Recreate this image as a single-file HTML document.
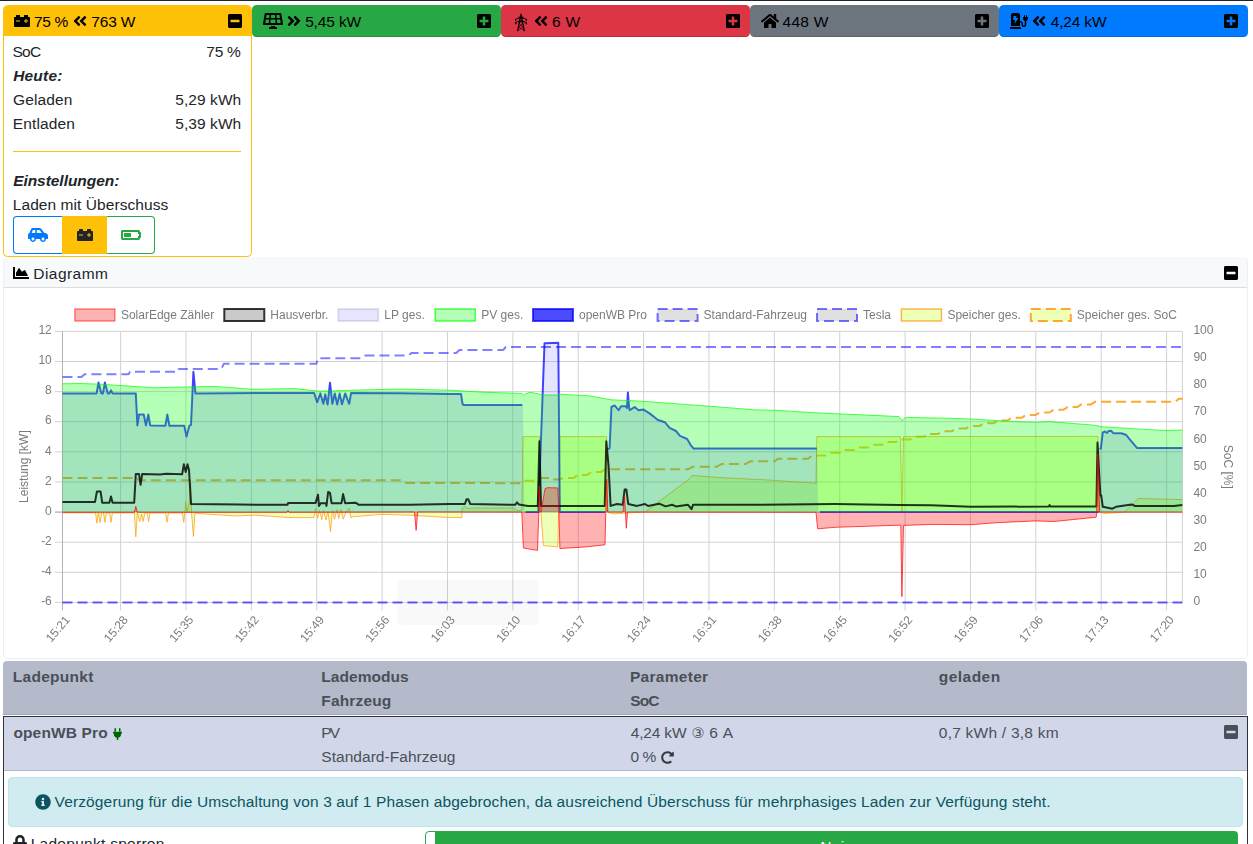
<!DOCTYPE html>
<html lang="de"><head><meta charset="utf-8"><title>openWB</title><style>
html,body{margin:0;padding:0}
body{width:1253px;height:844px;overflow:hidden;background:#fff;position:relative;font-family:"Liberation Sans",Arial,sans-serif;font-size:15.5px;line-height:24px;color:#212529}
#topline{position:absolute;left:0;top:0;width:1253px;height:1px;background:#21252b}
.card{position:absolute;box-sizing:border-box;border-radius:4.5px;overflow:hidden}
.ic{position:absolute;display:block;overflow:visible}
.btn{position:absolute;box-sizing:border-box}
.t{position:absolute;white-space:nowrap;line-height:24px;font-size:15.5px}
.hd{color:#000}
.bd{color:#212529}
.bi{font-weight:bold;font-style:italic}
.b{font-weight:bold}
.tb{color:#495057}
.al{color:#0c5460}
.wh{color:#fff}
</style></head><body>
<div id="topline"></div>
<div class="card c1" style="left:2.94px;top:4.9px;width:249.1px;height:252.2px;border:1px solid #ffc107;background:#fff"><div class="chd" style="background:#ffc107;height:30px"></div></div>
<div class="card" style="left:252.04px;top:4.9px;width:249.1px;height:32.3px;background:#28a745;border-bottom:1px solid rgba(0,0,0,.14)"></div>
<div class="card" style="left:501.14px;top:4.9px;width:249.1px;height:32.3px;background:#dc3545;border-bottom:1px solid rgba(0,0,0,.14)"></div>
<div class="card" style="left:750.24px;top:4.9px;width:249.1px;height:32.3px;background:#6c757d;border-bottom:1px solid rgba(0,0,0,.14)"></div>
<div class="card" style="left:999.34px;top:4.9px;width:249.1px;height:32.3px;background:#007bff;border-bottom:1px solid rgba(0,0,0,.14)"></div>
<svg class="ic" style="left:13.70px;top:13.00px" width="16.00" height="16" viewBox="0 0 512 512"><path fill="#000" d="M480 128h-32V80c0-8.840-7.160-16-16-16h-96c-8.840 0-16 7.160-16 16v48H192V80c0-8.840-7.160-16-16-16H80c-8.840 0-16 7.160-16 16v48H32c-17.670 0-32 14.330-32 32v256c0 17.670 14.330 32 32 32h448c17.670 0 32-14.330 32-32V160c0-17.670-14.330-32-32-32zM192 264c0 4.420-3.580 8-8 8H72c-4.420 0-8-3.580-8-8v-16c0-4.420 3.580-8 8-8h112c4.420 0 8 3.580 8 8v16zm256 0c0 4.420-3.580 8-8 8h-40v40c0 4.420-3.580 8-8 8h-16c-4.420 0-8-3.580-8-8v-40h-40c-4.420 0-8-3.580-8-8v-16c0-4.420 3.580-8 8-8h40v-40c0-4.420 3.580-8 8-8h16c4.420 0 8 3.580 8 8v40h40c4.420 0 8 3.580 8 8v16z"/></svg>
<svg class="ic" style="left:73.00px;top:12.50px" width="14.00" height="16" viewBox="0 0 448 512"><path fill="#000" d="M223.700 239l136-136c9.400-9.400 24.600-9.400 33.900 0l22.600 22.600c9.400 9.400 9.400 24.600 0 33.900L319.900 256l96.400 96.400c9.400 9.400 9.400 24.600 0 33.900L393.700 409c-9.400 9.400-24.600 9.400-33.900 0l-136-136c-9.500-9.400-9.500-24.600-.100-34zm-192 34l136 136c9.400 9.400 24.600 9.400 33.900 0l22.600-22.600c9.400-9.400 9.400-24.600 0-33.900L127.900 256l96.400-96.400c9.400-9.400 9.400-24.600 0-33.900L201.700 103c-9.400-9.400-24.600-9.400-33.900 0l-136 136c-9.500 9.400-9.500 24.600-.100 34z"/></svg>
<svg class="ic" style="left:227.60px;top:13.00px" width="14.00" height="16" viewBox="0 0 448 512"><path fill="#000" d="M400 32H48C21.500 32 0 53.500 0 80v352c0 26.500 21.500 48 48 48h352c26.500 0 48-21.500 48-48V80c0-26.500-21.500-48-48-48zM92 296c-6.600 0-12-5.400-12-12v-56c0-6.600 5.400-12 12-12h264c6.600 0 12 5.400 12 12v56c0 6.600-5.400 12-12 12H92z"/></svg>
<svg class="ic" style="left:262.60px;top:13.00px" width="20.00" height="16" viewBox="0 0 640 512"><path fill="#000" d="M431.980 448.010l-47.970.050V416h-128v32.210l-47.980.050c-8.820.010-15.970 7.160-15.980 15.990l-.050 31.730c-.010 8.850 7.170 16.030 16.020 16.020l223.960-.260c8.820-.010 15.970-7.160 15.980-15.980l.040-31.730c.010-8.850-7.170-16.030-16.020-16.020zM585.200 26.740C582.580 11.310 568.990 0 553.060 0H86.930C71 0 57.410 11.310 54.790 26.740-3.320 369.160.040 348.080.030 352c-.030 17.320 14.290 32 32.600 32h574.740c18.230 0 32.510-14.560 32.600-31.790.020-4.080 3.350 16.950-54.770-325.470zM259.830 64h120.330l9.770 96H250.060l9.770-96zm-75.170 256H71.090L90.100 208h105.930l-11.370 112zm16.290-160H98.240l16.290-96h96.190l-9.770 96zm32.820 160l11.400-112h149.650l11.400 112H233.770zm195.500-256h96.190l16.290 96H439.040l-9.770-96zm26.060 256l-11.400-112H549.900l19.010 112H455.330z"/></svg>
<svg class="ic" style="left:286.60px;top:12.50px" width="14.00" height="16" viewBox="0 0 448 512"><path fill="#000" d="M224.300 273l-136 136c-9.400 9.400-24.600 9.400-33.900 0l-22.600-22.600c-9.400-9.400-9.400-24.600 0-33.900l96.400-96.400-96.400-96.400c-9.400-9.400-9.400-24.600 0-33.900L54.300 103c9.400-9.400 24.600-9.400 33.900 0l136 136c9.500 9.400 9.500 24.600.100 34zm192-34l-136-136c-9.400-9.400-24.600-9.400-33.900 0l-22.600 22.600c-9.400 9.400-9.400 24.600 0 33.900l96.400 96.400-96.400 96.400c-9.400 9.400-9.400 24.600 0 33.900l22.600 22.600c9.400 9.400 24.600 9.400 33.900 0l136-136c9.400-9.200 9.400-24.400 0-33.800z"/></svg>
<svg class="ic" style="left:476.70px;top:13.00px" width="14.00" height="16" viewBox="0 0 448 512"><path fill="#000" d="M400 32H48C21.500 32 0 53.500 0 80v352c0 26.500 21.500 48 48 48h352c26.500 0 48-21.500 48-48V80c0-26.500-21.500-48-48-48zm-32 252c0 6.600-5.400 12-12 12h-92v92c0 6.600-5.400 12-12 12h-56c-6.600 0-12-5.400-12-12v-92H92c-6.600 0-12-5.400-12-12v-56c0-6.600 5.400-12 12-12h92v-92c0-6.600 5.400-12 12-12h56c6.600 0 12 5.400 12 12v92h92c6.600 0 12 5.400 12 12v56z"/></svg>
<svg class="ic" style="left:513.5px;top:13px" width="14" height="19" viewBox="0 0 14 19" fill="none" stroke="#000" stroke-linecap="round" stroke-linejoin="round"><path d="M7 1.2 L3.7 17.6 M7 1.2 L10.3 17.6" stroke-width="1.15"/><path d="M5.9 6.6 L8.8 10.8 L4.7 14 L10.3 17.6 M8.1 6.6 L5.2 10.8 L9.3 14 L3.7 17.6" stroke-width="0.65"/><path d="M1.7 6.5 C3.2 4.3 10.8 4.3 12.3 6.5 M5 4.2 L9 4.2" stroke-width="1"/><path d="M1.7 6.3 L1.7 7.2 M12.3 6.3 L12.3 7.2" stroke-width="1.3"/><path d="M1.8 9.8 C3.4 7.6 10.6 7.6 12.2 9.8" stroke-width="1"/><path d="M1.8 9.6 L1.8 10.8 M12.2 9.6 L12.2 10.8" stroke-width="1.3"/></svg>
<svg class="ic" style="left:533.70px;top:12.50px" width="14.00" height="16" viewBox="0 0 448 512"><path fill="#000" d="M223.700 239l136-136c9.400-9.400 24.600-9.400 33.900 0l22.600 22.600c9.400 9.400 9.400 24.600 0 33.900L319.900 256l96.400 96.400c9.400 9.400 9.400 24.600 0 33.900L393.700 409c-9.400 9.400-24.600 9.400-33.900 0l-136-136c-9.500-9.400-9.500-24.600-.100-34zm-192 34l136 136c9.400 9.400 24.600 9.400 33.900 0l22.600-22.600c9.400-9.400 9.400-24.600 0-33.900L127.900 256l96.400-96.400c9.400-9.400 9.400-24.600 0-33.900L201.700 103c-9.400-9.400-24.600-9.400-33.900 0l-136 136c-9.500 9.400-9.500 24.600-.100 34z"/></svg>
<svg class="ic" style="left:725.80px;top:13.00px" width="14.00" height="16" viewBox="0 0 448 512"><path fill="#000" d="M400 32H48C21.500 32 0 53.500 0 80v352c0 26.500 21.500 48 48 48h352c26.500 0 48-21.500 48-48V80c0-26.500-21.500-48-48-48zm-32 252c0 6.600-5.400 12-12 12h-92v92c0 6.600-5.400 12-12 12h-56c-6.600 0-12-5.400-12-12v-92H92c-6.600 0-12-5.400-12-12v-56c0-6.600 5.400-12 12-12h92v-92c0-6.600 5.400-12 12-12h56c6.600 0 12 5.400 12 12v92h92c6.600 0 12 5.400 12 12v56z"/></svg>
<svg class="ic" style="left:760.90px;top:13.00px" width="18.00" height="16" viewBox="0 0 576 512"><path fill="#000" d="M280.370 148.260L96 300.110V464a16 16 0 0 0 16 16l112.060-.290a16 16 0 0 0 15.920-16V368a16 16 0 0 1 16-16h64a16 16 0 0 1 16 16v95.640a16 16 0 0 0 16 16.050L464 480a16 16 0 0 0 16-16V300L295.670 148.260a12.190 12.190 0 0 0-15.300 0zM571.600 251.470L488 182.560V44.050a12 12 0 0 0-12-12h-56a12 12 0 0 0-12 12v72.610L318.470 43a48 48 0 0 0-61 0L4.340 251.470a12 12 0 0 0-1.600 16.900l25.500 31A12 12 0 0 0 45.150 301l235.220-193.740a12.190 12.190 0 0 1 15.300 0L530.900 301a12 12 0 0 0 16.900-1.600l25.500-31a12 12 0 0 0-1.700-16.930z"/></svg>
<svg class="ic" style="left:974.90px;top:13.00px" width="14.00" height="16" viewBox="0 0 448 512"><path fill="#000" d="M400 32H48C21.500 32 0 53.500 0 80v352c0 26.500 21.500 48 48 48h352c26.500 0 48-21.500 48-48V80c0-26.500-21.500-48-48-48zm-32 252c0 6.600-5.400 12-12 12h-92v92c0 6.600-5.400 12-12 12h-56c-6.600 0-12-5.400-12-12v-92H92c-6.600 0-12-5.400-12-12v-56c0-6.600 5.400-12 12-12h92v-92c0-6.600 5.400-12 12-12h56c6.600 0 12 5.400 12 12v92h92c6.600 0 12 5.400 12 12v56z"/></svg>
<svg class="ic" style="left:1009.70px;top:13.00px" width="18.00" height="16" viewBox="0 0 576 512"><path fill="#000" d="M336 448H16c-8.840 0-16 7.160-16 16v32c0 8.840 7.160 16 16 16h320c8.840 0 16-7.160 16-16v-32c0-8.840-7.160-16-16-16zm208-320V80c0-8.840-7.160-16-16-16s-16 7.160-16 16v48h-32V80c0-8.840-7.160-16-16-16s-16 7.160-16 16v48h-16c-8.840 0-16 7.160-16 16v32c0 35.760 23.620 65.690 56 75.930v118.490c0 13.950-9.500 26.920-23.260 29.190C431.220 402.500 416 388.990 416 372v-28c0-48.600-39.400-88-88-88h-8V64c0-35.350-28.650-64-64-64H96C60.650 0 32 28.650 32 64v352h288V304h8c22.090 0 40 17.910 40 40v24.610c0 39.670 28.920 75.160 68.410 79.010C481.710 452.050 520 416.410 520 372V251.930c32.380-10.240 56-40.170 56-75.930v-32c0-8.840-7.160-16-16-16h-16zm-283.910 47.760l-93.700 139c-2.200 3.330-6.210 5.240-10.390 5.240-7.670 0-13.470-6.280-11.670-12.920L167.350 224H108c-7.250 0-12.850-5.590-11.890-11.890l16-107C112.900 99.900 117.980 96 124 96h68c7.880 0 13.620 6.540 11.600 13.210L192 160h57.700c9.240 0 15.010 8.780 10.390 15.760z"/></svg>
<svg class="ic" style="left:1032.20px;top:12.50px" width="14.00" height="16" viewBox="0 0 448 512"><path fill="#000" d="M223.700 239l136-136c9.400-9.400 24.600-9.400 33.900 0l22.600 22.600c9.400 9.400 9.400 24.600 0 33.900L319.900 256l96.400 96.400c9.400 9.400 9.400 24.600 0 33.900L393.700 409c-9.400 9.400-24.600 9.400-33.900 0l-136-136c-9.500-9.400-9.500-24.600-.100-34zm-192 34l136 136c9.400 9.400 24.600 9.400 33.900 0l22.600-22.600c9.400-9.400 9.400-24.600 0-33.900L127.900 256l96.400-96.400c9.400-9.400 9.400-24.600 0-33.900L201.700 103c-9.400-9.400-24.600-9.400-33.900 0l-136 136c-9.500 9.400-9.500 24.600-.100 34z"/></svg>
<svg class="ic" style="left:1224.00px;top:13.00px" width="14.00" height="16" viewBox="0 0 448 512"><path fill="#000" d="M400 32H48C21.500 32 0 53.500 0 80v352c0 26.500 21.500 48 48 48h352c26.500 0 48-21.500 48-48V80c0-26.500-21.500-48-48-48zm-32 252c0 6.600-5.400 12-12 12h-92v92c0 6.600-5.400 12-12 12h-56c-6.600 0-12-5.400-12-12v-92H92c-6.600 0-12-5.400-12-12v-56c0-6.600 5.400-12 12-12h92v-92c0-6.600 5.400-12 12-12h56c6.600 0 12 5.400 12 12v92h92c6.600 0 12 5.400 12 12v56z"/></svg>
<div style="position:absolute;left:13.1px;top:151px;width:227.8px;height:1px;background:#ffc107"></div>
<div class="btn" style="left:13.1px;top:216px;width:49.4px;height:38px;border:1px solid #007bff;border-right:0;border-radius:4px 0 0 4px"></div>
<div class="btn" style="left:62.1px;top:216px;width:45px;height:38px;background:#ffc107"></div>
<div class="btn" style="left:107.1px;top:216px;width:48px;height:38px;border:1px solid #28a745;border-left:0;border-radius:0 4px 4px 0"></div>
<svg class="ic" style="left:27.90px;top:227.00px" width="20.00" height="16" viewBox="0 0 640 512"><path fill="#007bff" d="M544 192h-16L419.220 56.020A64.025 64.025 0 0 0 369.240 32H155.330c-26.170 0-49.700 15.930-59.420 40.230L48 194.260C20.440 201.400 0 226.210 0 256v112c0 8.840 7.160 16 16 16h48c0 53.020 42.980 96 96 96s96-42.980 96-96h128c0 53.020 42.980 96 96 96s96-42.980 96-96h48c8.840 0 16-7.160 16-16v-80c0-53.020-42.980-96-96-96zM160 432c-26.470 0-48-21.530-48-48s21.530-48 48-48 48 21.530 48 48-21.530 48-48 48zm72-240H116.930l38.400-96H232v96zm48 0V96h89.240l76.800 96H280zm200 240c-26.470 0-48-21.530-48-48s21.530-48 48-48 48 21.530 48 48-21.530 48-48 48z"/></svg>
<svg class="ic" style="left:76.60px;top:227.00px" width="16.00" height="16" viewBox="0 0 512 512"><path fill="#212529" d="M480 128h-32V80c0-8.840-7.160-16-16-16h-96c-8.840 0-16 7.160-16 16v48H192V80c0-8.840-7.160-16-16-16H80c-8.840 0-16 7.160-16 16v48H32c-17.670 0-32 14.330-32 32v256c0 17.670 14.330 32 32 32h448c17.670 0 32-14.330 32-32V160c0-17.670-14.330-32-32-32zM192 264c0 4.420-3.580 8-8 8H72c-4.420 0-8-3.580-8-8v-16c0-4.420 3.580-8 8-8h112c4.420 0 8 3.580 8 8v16zm256 0c0 4.420-3.580 8-8 8h-40v40c0 4.420-3.580 8-8 8h-16c-4.420 0-8-3.580-8-8v-40h-40c-4.420 0-8-3.580-8-8v-16c0-4.420 3.580-8 8-8h40v-40c0-4.420 3.580-8 8-8h16c4.420 0 8 3.580 8 8v40h40c4.420 0 8 3.580 8 8v16z"/></svg>
<svg class="ic" style="left:120.50px;top:227.00px" width="20.00" height="16" viewBox="0 0 640 512"><path fill="#28a745" d="M544 160v64h32v64h-32v64H64V160h480m16-64H48c-26.510 0-48 21.490-48 48v224c0 26.510 21.490 48 48 48h512c26.510 0 48-21.490 48-48v-16h8c13.255 0 24-10.745 24-24V184c0-13.255-10.745-24-24-24h-8v-16c0-26.510-21.490-48-48-48zm-240 96H96v128h224V192z"/></svg>
<div class="card" style="left:3px;top:257.1px;width:1245px;height:401.9px;border:1px solid #f0f0f0;border-top:0;background:#fff"><div style="height:29.8px;background:#f8f9fa;border-bottom:1px solid #dcdddf"></div></div>
<svg class="ic" style="left:13.10px;top:265.20px" width="16.00" height="16" viewBox="0 0 512 512"><path fill="#000" d="M500 384c6.600 0 12 5.400 12 12v40c0 6.600-5.400 12-12 12H12c-6.600 0-12-5.400-12-12V76c0-6.600 5.400-12 12-12h40c6.600 0 12 5.400 12 12v308h436zM372.700 159.500L288 216l-85.300-113.700c-5.100-6.800-15.500-6.300-19.900 1L96 248v104h384l-89.900-187.800c-3.200-6.500-11.400-8.700-17.400-4.700z"/></svg>
<svg class="ic" style="left:1223.80px;top:265.00px" width="14.00" height="16" viewBox="0 0 448 512"><path fill="#000" d="M400 32H48C21.500 32 0 53.500 0 80v352c0 26.500 21.500 48 48 48h352c26.500 0 48-21.500 48-48V80c0-26.500-21.500-48-48-48zM92 296c-6.600 0-12-5.400-12-12v-56c0-6.600 5.400-12 12-12h264c6.600 0 12 5.400 12 12v56c0 6.600-5.400 12-12 12H92z"/></svg>
<svg id="chart" style="position:absolute;left:0;top:288px;will-change:transform" width="1253" height="371" viewBox="0 288 1253 371">
<g stroke="#d2d2d2" stroke-width="1" fill="none"><line x1="55" x2="1182.4" y1="331.40" y2="331.40"/><line x1="55" x2="1182.4" y1="361.51" y2="361.51"/><line x1="55" x2="1182.4" y1="391.62" y2="391.62"/><line x1="55" x2="1182.4" y1="421.73" y2="421.73"/><line x1="55" x2="1182.4" y1="451.84" y2="451.84"/><line x1="55" x2="1182.4" y1="481.96" y2="481.96"/><line x1="55" x2="1182.4" y1="512.07" y2="512.07"/><line x1="55" x2="1182.4" y1="542.18" y2="542.18"/><line x1="55" x2="1182.4" y1="572.29" y2="572.29"/><line x1="55" x2="1182.4" y1="602.40" y2="602.40"/><line x1="62.50" x2="62.50" y1="331.4" y2="610.4"/><line x1="120.60" x2="120.60" y1="331.4" y2="610.4"/><line x1="185.97" x2="185.97" y1="331.4" y2="610.4"/><line x1="251.35" x2="251.35" y1="331.4" y2="610.4"/><line x1="316.73" x2="316.73" y1="331.4" y2="610.4"/><line x1="382.10" x2="382.10" y1="331.4" y2="610.4"/><line x1="447.48" x2="447.48" y1="331.4" y2="610.4"/><line x1="512.85" x2="512.85" y1="331.4" y2="610.4"/><line x1="578.23" x2="578.23" y1="331.4" y2="610.4"/><line x1="643.60" x2="643.60" y1="331.4" y2="610.4"/><line x1="708.98" x2="708.98" y1="331.4" y2="610.4"/><line x1="774.35" x2="774.35" y1="331.4" y2="610.4"/><line x1="839.73" x2="839.73" y1="331.4" y2="610.4"/><line x1="905.10" x2="905.10" y1="331.4" y2="610.4"/><line x1="970.48" x2="970.48" y1="331.4" y2="610.4"/><line x1="1035.85" x2="1035.85" y1="331.4" y2="610.4"/><line x1="1101.22" x2="1101.22" y1="331.4" y2="610.4"/><line x1="1166.60" x2="1166.60" y1="331.4" y2="610.4"/><line x1="1182.4" x2="1182.4" y1="331.4" y2="602.4"/></g>
<line x1="62.5" x2="62.5" y1="331.4" y2="610.4" stroke="#b4b4b4" stroke-width="1"/>
<line x1="55" x2="1182.4" y1="512.1" y2="512.1" stroke="#b0b0b0" stroke-width="1"/>
<rect x="397" y="580" width="142" height="45" rx="5" fill="#000" fill-opacity="0.025"/>
<clipPath id="cp"><rect x="61.5" y="329.4" width="1121.4" height="275.0"/></clipPath>
<g clip-path="url(#cp)" fill="none" stroke-linejoin="round">
<polyline points="62.5,477.9 137.4,477.9 138.2,480.3 401.2,480.3 406.0,482.9 520.2,483.2 525.0,480.8 533.0,480.8 538.6,478.1 551.4,478.1 552.5,479.5 558.0,479.5 564.2,477.9 574.0,477.9 577.8,474.9 587.4,474.9 591.4,472.0 601.0,472.0 605.0,469.3 688.0,469.3 692.8,466.7 716.8,466.7 721.6,464.0 745.6,464.0 750.4,461.3 774.4,461.3 778.4,458.7 808.0,458.7 812.0,455.5 816.8,455.5 826.6,455.5 831.0,452.8 840.5,452.8 844.9,450.1 854.4,450.1 858.8,447.4 868.3,447.4 872.7,444.7 882.3,444.7 886.7,442.0 896.2,442.0 900.6,439.4 910.1,439.4 914.5,436.7 924.0,436.7 928.4,434.0 937.9,434.0 942.3,431.3 951.8,431.3 956.2,428.6 965.8,428.6 970.2,425.9 979.7,425.9 984.1,423.2 993.6,423.2 998.0,420.5 1007.5,420.5 1011.9,417.8 1021.4,417.8 1025.8,415.1 1035.3,415.1 1039.7,412.5 1049.3,412.5 1053.7,409.8 1063.2,409.8 1067.6,407.1 1077.1,407.1 1081.5,404.4 1091.0,404.4 1095.4,401.7 1175.6,401.7 1178.8,398.8 1182.4,398.8" stroke="rgba(255,153,13,0.85)" stroke-width="2" stroke-dasharray="10 5"/>
<path d="M62.5 512.8 L95.5 512.8 L96.9 523.2 L98.3 513.0 L100.1 522.4 L101.7 513.0 L103.5 513.0 L104.9 522.4 L106.3 513.0 L109.6 513.0 L111.0 522.4 L112.4 513.0 L134.3 512.8 L135.8 536.8 L137.3 513.0 L139.8 521.6 L141.5 514.0 L143.0 521.6 L145.0 513.0 L147.2 513.0 L148.6 521.6 L150.0 513.0 L165.5 513.0 L167.0 522.4 L168.5 513.0 L182.4 513.0 L183.8 522.4 L184.8 513.0 L185.7 501.6 L187.0 512.0 L189.5 501.6 L190.7 483.2 L191.5 512.0 L193.4 536.5 L195.0 513.0 L199.0 513.6 L235.8 516.0 L255.0 515.2 L290.0 517.6 L314.0 517.6 L315.6 508.8 L317.5 518.4 L319.5 510.4 L321.8 519.5 L323.5 510.4 L326.0 520.0 L328.0 512.0 L330.5 531.5 L332.5 510.4 L334.5 519.2 L336.8 509.6 L338.8 518.4 L341.0 509.6 L343.2 519.2 L346.0 512.0 L349.2 508.0 L351.0 518.0 L352.4 516.8 L381.0 514.4 L410.0 515.2 L445.0 517.3 L461.8 517.6 L462.2 508.0 L465.0 506.4 L467.0 508.8 L470.6 508.0 L513.8 508.0 L517.0 510.4 L521.8 510.4 L523.1 436.6 L539.4 436.6 L541.0 512.1 L543.4 545.6 L557.8 546.9 L558.6 512.1 L559.9 436.6 L606.6 436.6 L607.5 512.1 L613.8 514.0 L625.0 513.0 L644.8 512.1 L688.0 480.0 L692.0 475.5 L720.0 477.6 L768.0 480.0 L816.0 483.2 L816.8 436.6 L900.3 436.6 L901.9 512.1 L903.5 436.6 L1098.0 436.4 L1099.0 512.1 L1105.0 513.5 L1124.4 512.1 L1138.0 498.5 L1182.4 499.6 L1182.4 512.1 L62.5 512.1 Z" fill="rgba(200,255,13,0.3)"/>
<polyline points="62.5,512.8 95.5,512.8 96.9,523.2 98.3,513.0 100.1,522.4 101.7,513.0 103.5,513.0 104.9,522.4 106.3,513.0 109.6,513.0 111.0,522.4 112.4,513.0 134.3,512.8 135.8,536.8 137.3,513.0 139.8,521.6 141.5,514.0 143.0,521.6 145.0,513.0 147.2,513.0 148.6,521.6 150.0,513.0 165.5,513.0 167.0,522.4 168.5,513.0 182.4,513.0 183.8,522.4 184.8,513.0 185.7,501.6 187.0,512.0 189.5,501.6 190.7,483.2 191.5,512.0 193.4,536.5 195.0,513.0 199.0,513.6 235.8,516.0 255.0,515.2 290.0,517.6 314.0,517.6 315.6,508.8 317.5,518.4 319.5,510.4 321.8,519.5 323.5,510.4 326.0,520.0 328.0,512.0 330.5,531.5 332.5,510.4 334.5,519.2 336.8,509.6 338.8,518.4 341.0,509.6 343.2,519.2 346.0,512.0 349.2,508.0 351.0,518.0 352.4,516.8 381.0,514.4 410.0,515.2 445.0,517.3 461.8,517.6 462.2,508.0 465.0,506.4 467.0,508.8 470.6,508.0 513.8,508.0 517.0,510.4 521.8,510.4 523.1,436.6 539.4,436.6 541.0,512.1 543.4,545.6 557.8,546.9 558.6,512.1 559.9,436.6 606.6,436.6 607.5,512.1 613.8,514.0 625.0,513.0 644.8,512.1 688.0,480.0 692.0,475.5 720.0,477.6 768.0,480.0 816.0,483.2 816.8,436.6 900.3,436.6 901.9,512.1 903.5,436.6 1098.0,436.4 1099.0,512.1 1105.0,513.5 1124.4,512.1 1138.0,498.5 1182.4,499.6" stroke="rgba(255,153,13,0.7)" stroke-width="1"/>
<polyline points="62.5,377.1 81.4,377.1 84.6,374.2 128.6,374.2 130.0,371.8 178.0,371.8 178.8,368.9 221.4,368.9 223.8,363.8 316.4,363.8 318.0,358.2 360.4,358.2 364.4,355.5 408.4,355.5 411.6,352.9 456.2,352.9 459.4,349.9 503.4,349.9 505.8,347.0 1182.4,347.0" stroke="rgba(0,0,255,0.5)" stroke-width="2" stroke-dasharray="10 5"/>
<polyline points="62.5,602.4 1182.4,602.4" stroke="rgba(0,0,255,0.6)" stroke-width="2" stroke-dasharray="10 5"/>
<polyline points="62.5,393.4 96.6,393.4 98.5,382.5 101.4,393.4 103.0,393.4 104.9,382.5 107.8,393.4 109.5,393.4 111.0,390.2 112.6,393.4 135.8,393.4 137.4,425.4 139.0,414.5 143.8,414.5 145.9,425.4 148.3,414.5 150.2,425.4 165.4,425.7 167.3,414.5 169.4,425.7 184.3,425.7 186.5,436.6 189.4,425.7 191.0,425.0 193.4,371.8 195.5,393.4 230.0,393.2 270.0,393.0 314.0,392.9 317.2,402.2 320.4,393.4 323.3,403.8 325.2,394.2 327.6,404.6 330.0,382.7 332.4,403.8 334.8,393.4 337.2,404.6 339.6,393.4 342.0,404.3 345.2,393.4 349.2,403.8 351.1,392.9 400.0,393.3 450.0,393.9 461.0,393.9 462.6,404.1 464.0,405.1 522.3,405.1" stroke="rgba(0,0,255,0.72)" stroke-width="2"/>
<polyline points="525.6,512.1 538.3,512.1 544.5,343.3 558.3,342.7 559.8,512.1 605.0,512.1" stroke="rgba(0,0,255,0.72)" stroke-width="2"/>
<polyline points="607.7,449.5 609.6,448.2 610.4,430.0 611.4,407.0 614.6,405.4 618.6,410.2 621.0,406.2 625.8,406.2 626.9,408.0 627.9,392.6 629.3,409.5 629.8,410.2 634.6,407.0 638.6,410.2 643.2,409.4 649.6,413.4 657.6,419.8 664.8,422.2 669.6,427.8 676.0,431.0 680.0,435.8 687.2,439.0 690.4,444.6 693.6,448.6 816.8,448.6" stroke="rgba(0,0,255,0.72)" stroke-width="2"/>
<polyline points="820.0,512.1 1098.6,512.1" stroke="rgba(0,0,255,0.72)" stroke-width="2"/>
<polyline points="1099.6,449.0 1100.8,448.4 1102.8,432.4 1105.0,431.5 1107.0,433.0 1108.5,431.0 1111.0,430.8 1113.5,433.2 1121.2,433.2 1126.0,434.8 1137.2,448.1 1182.4,448.1" stroke="rgba(0,0,255,0.72)" stroke-width="2"/>
<path d="M62.5 383.8 L80.0 383.5 L100.0 384.2 L120.0 385.5 L140.0 386.8 L155.8 387.8 L170.0 387.3 L185.7 387.0 L200.0 386.7 L215.0 386.5 L230.0 387.5 L245.0 388.8 L255.0 389.4 L270.0 389.0 L295.0 388.6 L317.0 391.0 L330.0 391.0 L352.0 390.2 L380.0 389.5 L402.0 389.1 L430.0 389.8 L450.0 390.2 L477.0 391.8 L500.0 392.8 L521.8 393.4 L523.4 395.5 L525.0 394.0 L529.8 392.3 L537.0 393.5 L542.6 395.0 L557.0 395.0 L560.2 394.2 L589.0 395.8 L611.4 399.8 L640.0 401.1 L675.0 403.7 L709.6 406.2 L755.2 409.9 L774.4 410.2 L810.0 412.5 L835.0 413.7 L883.0 415.8 L899.0 416.6 L901.9 420.6 L905.4 417.4 L947.0 418.2 L971.0 419.0 L1011.0 421.4 L1035.0 422.3 L1049.0 421.5 L1094.0 425.2 L1102.0 426.8 L1142.0 429.2 L1166.0 430.5 L1182.4 430.0 L1182.4 512.1 L62.5 512.1 Z" fill="rgba(10,255,13,0.3)"/>
<polyline points="62.5,383.8 80.0,383.5 100.0,384.2 120.0,385.5 140.0,386.8 155.8,387.8 170.0,387.3 185.7,387.0 200.0,386.7 215.0,386.5 230.0,387.5 245.0,388.8 255.0,389.4 270.0,389.0 295.0,388.6 317.0,391.0 330.0,391.0 352.0,390.2 380.0,389.5 402.0,389.1 430.0,389.8 450.0,390.2 477.0,391.8 500.0,392.8 521.8,393.4 523.4,395.5 525.0,394.0 529.8,392.3 537.0,393.5 542.6,395.0 557.0,395.0 560.2,394.2 589.0,395.8 611.4,399.8 640.0,401.1 675.0,403.7 709.6,406.2 755.2,409.9 774.4,410.2 810.0,412.5 835.0,413.7 883.0,415.8 899.0,416.6 901.9,420.6 905.4,417.4 947.0,418.2 971.0,419.0 1011.0,421.4 1035.0,422.3 1049.0,421.5 1094.0,425.2 1102.0,426.8 1142.0,429.2 1166.0,430.5 1182.4,430.0" stroke="rgba(0,255,0,0.7)" stroke-width="1"/>
<path d="M62.5 393.4 L96.6 393.4 L98.5 382.5 L101.4 393.4 L103.0 393.4 L104.9 382.5 L107.8 393.4 L109.5 393.4 L111.0 390.2 L112.6 393.4 L135.8 393.4 L137.4 425.4 L139.0 414.5 L143.8 414.5 L145.9 425.4 L148.3 414.5 L150.2 425.4 L165.4 425.7 L167.3 414.5 L169.4 425.7 L184.3 425.7 L186.5 436.6 L189.4 425.7 L191.0 425.0 L193.4 371.8 L195.5 393.4 L230.0 393.2 L270.0 393.0 L314.0 392.9 L317.2 402.2 L320.4 393.4 L323.3 403.8 L325.2 394.2 L327.6 404.6 L330.0 382.7 L332.4 403.8 L334.8 393.4 L337.2 404.6 L339.6 393.4 L342.0 404.3 L345.2 393.4 L349.2 403.8 L351.1 392.9 L400.0 393.3 L450.0 393.9 L461.0 393.9 L462.6 404.1 L464.0 405.1 L522.3 405.1 L523.9 512.1 L538.3 512.1 L544.5 343.3 L558.3 342.7 L559.8 512.1 L605.0 512.1 L606.8 512.1 L607.7 449.5 L609.6 448.2 L610.4 430.0 L611.4 407.0 L614.6 405.4 L618.6 410.2 L621.0 406.2 L625.8 406.2 L626.9 408.0 L627.9 392.6 L629.3 409.5 L629.8 410.2 L634.6 407.0 L638.6 410.2 L643.2 409.4 L649.6 413.4 L657.6 419.8 L664.8 422.2 L669.6 427.8 L676.0 431.0 L680.0 435.8 L687.2 439.0 L690.4 444.6 L693.6 448.6 L816.8 448.6 L817.6 512.1 L1098.8 512.1 L1099.6 449.0 L1100.8 448.4 L1102.8 432.4 L1105.0 431.5 L1107.0 433.0 L1108.5 431.0 L1111.0 430.8 L1113.5 433.2 L1121.2 433.2 L1126.0 434.8 L1137.2 448.1 L1182.4 448.1 L1182.4 512.1 L62.5 512.1 Z" fill="rgba(0,0,255,0.1)"/>
<polyline points="62.5,393.4 96.6,393.4 98.5,382.5 101.4,393.4 103.0,393.4 104.9,382.5 107.8,393.4 109.5,393.4 111.0,390.2 112.6,393.4 135.8,393.4 137.4,425.4 139.0,414.5 143.8,414.5 145.9,425.4 148.3,414.5 150.2,425.4 165.4,425.7 167.3,414.5 169.4,425.7 184.3,425.7 186.5,436.6 189.4,425.7 191.0,425.0 193.4,371.8 195.5,393.4 230.0,393.2 270.0,393.0 314.0,392.9 317.2,402.2 320.4,393.4 323.3,403.8 325.2,394.2 327.6,404.6 330.0,382.7 332.4,403.8 334.8,393.4 337.2,404.6 339.6,393.4 342.0,404.3 345.2,393.4 349.2,403.8 351.1,392.9 400.0,393.3 450.0,393.9 461.0,393.9 462.6,404.1 464.0,405.1 522.3,405.1 523.9,512.1 538.3,512.1 544.5,343.3 558.3,342.7 559.8,512.1 605.0,512.1 606.8,512.1 607.7,449.5 609.6,448.2 610.4,430.0 611.4,407.0 614.6,405.4 618.6,410.2 621.0,406.2 625.8,406.2 626.9,408.0 627.9,392.6 629.3,409.5 629.8,410.2 634.6,407.0 638.6,410.2 643.2,409.4 649.6,413.4 657.6,419.8 664.8,422.2 669.6,427.8 676.0,431.0 680.0,435.8 687.2,439.0 690.4,444.6 693.6,448.6 816.8,448.6 817.6,512.1 1098.8,512.1 1099.6,449.0 1100.8,448.4 1102.8,432.4 1105.0,431.5 1107.0,433.0 1108.5,431.0 1111.0,430.8 1113.5,433.2 1121.2,433.2 1126.0,434.8 1137.2,448.1 1182.4,448.1" stroke="rgba(0,0,255,0.08)" stroke-width="1"/>
<polyline points="62.5,502.1 95.0,502.1 96.9,491.5 100.6,491.5 102.2,502.7 109.4,502.7 111.0,496.5 112.6,502.7 134.2,502.7 135.8,473.9 139.0,473.9 140.6,484.8 142.2,473.9 160.0,474.4 166.0,473.8 182.2,474.2 183.8,464.3 185.7,472.0 187.5,464.3 189.0,470.0 191.0,504.0 240.0,504.6 287.6,504.8 288.0,502.9 315.6,502.9 318.0,494.7 319.0,506.0 320.5,503.2 326.0,503.2 326.5,506.0 328.1,492.0 330.0,493.0 331.6,503.2 341.5,503.2 343.1,494.1 345.2,503.2 355.6,502.7 358.8,504.8 410.0,504.8 450.0,504.0 464.9,504.0 466.6,499.2 468.2,499.2 470.3,504.0 515.4,504.8 517.0,502.4 519.0,504.5 528.0,505.9 537.8,505.9 539.4,441.3 541.0,505.9 604.7,505.9 606.3,441.3 608.5,464.8 610.6,505.9 617.0,504.0 622.8,504.8 624.6,489.6 626.4,489.6 628.2,504.0 637.0,505.9 645.0,504.0 648.0,505.9 659.2,503.7 665.6,506.4 672.0,504.8 676.0,506.4 688.0,504.8 691.5,509.1 693.0,504.8 760.0,504.8 835.0,504.1 899.0,504.9 931.0,505.2 971.0,506.8 1049.0,506.5 1049.5,505.0 1050.5,506.5 1096.4,506.5 1097.5,442.5 1100.4,495.6 1101.2,495.3 1102.8,506.8 1112.4,508.7 1116.0,506.8 1131.6,504.4 1135.0,506.0 1174.0,506.0 1182.4,504.9" stroke="rgba(0,0,0,0.8)" stroke-width="2"/>
<path d="M62.5 512.3 L134.3 512.3 L135.8 506.4 L137.3 512.3 L287.0 512.3 L288.0 510.5 L289.0 512.3 L414.5 512.0 L416.1 530.4 L417.7 512.0 L521.8 512.1 L523.4 548.0 L534.6 550.0 L537.5 550.4 L538.8 512.1 L539.2 486.4 L540.2 512.1 L541.0 512.1 L545.0 488.8 L547.0 487.7 L557.8 487.9 L558.9 512.1 L559.9 548.5 L585.8 546.9 L605.0 544.8 L605.8 512.1 L606.6 479.2 L607.8 512.1 L623.0 512.1 L624.5 496.0 L625.4 512.1 L626.3 528.3 L627.5 512.1 L816.0 512.3 L817.6 528.8 L835.0 527.3 L899.0 525.2 L900.8 525.4 L901.9 596.7 L903.5 525.4 L931.0 524.4 L971.0 524.7 L995.0 522.8 L1035.0 520.9 L1054.0 521.5 L1096.2 517.2 L1096.6 512.1 L1097.9 454.0 L1099.6 512.1 L1182.4 512.1 L1182.4 512.1 L62.5 512.1 Z" fill="rgba(255,0,0,0.3)"/>
<polyline points="62.5,512.3 134.3,512.3 135.8,506.4 137.3,512.3 287.0,512.3 288.0,510.5 289.0,512.3 414.5,512.0 416.1,530.4 417.7,512.0 521.8,512.1 523.4,548.0 534.6,550.0 537.5,550.4 538.8,512.1 539.2,486.4 540.2,512.1 541.0,512.1 545.0,488.8 547.0,487.7 557.8,487.9 558.9,512.1 559.9,548.5 585.8,546.9 605.0,544.8 605.8,512.1 606.6,479.2 607.8,512.1 623.0,512.1 624.5,496.0 625.4,512.1 626.3,528.3 627.5,512.1 816.0,512.3 817.6,528.8 835.0,527.3 899.0,525.2 900.8,525.4 901.9,596.7 903.5,525.4 931.0,524.4 971.0,524.7 995.0,522.8 1035.0,520.9 1054.0,521.5 1096.2,517.2 1096.6,512.1 1097.9,454.0 1099.6,512.1 1182.4,512.1" stroke="rgba(255,0,0,0.7)" stroke-width="1"/>
</g>
<rect x="74.9" y="309" width="40" height="12" fill="rgba(255,0,0,0.3)" stroke="rgba(255,0,0,0.7)" stroke-width="1"/>
<rect x="224.3" y="309" width="40" height="12" fill="rgba(150,150,150,0.5)" stroke="rgba(0,0,0,0.78)" stroke-width="2"/>
<rect x="338.3" y="309" width="40" height="12" fill="rgba(0,0,255,0.1)" stroke="rgba(60,60,120,0.14)" stroke-width="2"/>
<rect x="435.2" y="309" width="40" height="12" fill="rgba(10,255,13,0.3)" stroke="rgba(0,255,0,0.7)" stroke-width="1.5"/>
<rect x="533.0" y="309" width="40" height="12" fill="rgba(0,0,255,0.7)" stroke="rgba(0,0,255,0.7)" stroke-width="2"/>
<rect x="657.6" y="309" width="40" height="12" fill="rgba(0,0,0,0.12)" stroke="rgba(0,0,255,0.55)" stroke-width="2" stroke-dasharray="10 5"/>
<rect x="817.0" y="309" width="40" height="12" fill="rgba(0,0,0,0.12)" stroke="rgba(0,0,255,0.55)" stroke-width="2" stroke-dasharray="10 5"/>
<rect x="901.4" y="309" width="40" height="12" fill="rgba(200,255,13,0.3)" stroke="rgba(255,153,13,0.7)" stroke-width="1.5"/>
<rect x="1030.8" y="309" width="40" height="12" fill="rgba(200,255,13,0.3)" stroke="rgba(255,153,13,0.85)" stroke-width="2" stroke-dasharray="10 5"/>
<g font-family="Liberation Sans, Arial, sans-serif" font-size="12" fill="#7c7c7c"><text x="51.8" y="334.1" text-anchor="end">12</text><text x="51.8" y="364.2" text-anchor="end">10</text><text x="51.8" y="394.3" text-anchor="end">8</text><text x="51.8" y="424.4" text-anchor="end">6</text><text x="51.8" y="454.5" text-anchor="end">4</text><text x="51.8" y="484.7" text-anchor="end">2</text><text x="51.8" y="514.8" text-anchor="end">0</text><text x="51.8" y="544.9" text-anchor="end">-2</text><text x="51.8" y="575.0" text-anchor="end">-4</text><text x="51.8" y="605.1" text-anchor="end">-6</text><text x="1193.4" y="334.1">100</text><text x="1193.4" y="361.2">90</text><text x="1193.4" y="388.3">80</text><text x="1193.4" y="415.4">70</text><text x="1193.4" y="442.5">60</text><text x="1193.4" y="469.6">50</text><text x="1193.4" y="496.7">40</text><text x="1193.4" y="523.8">30</text><text x="1193.4" y="550.9">20</text><text x="1193.4" y="578.0">10</text><text x="1193.4" y="605.1">0</text><text transform="translate(67.5 617.5) rotate(-50)" text-anchor="end" y="4">15:21</text><text transform="translate(125.6 617.5) rotate(-50)" text-anchor="end" y="4">15:28</text><text transform="translate(191.0 617.5) rotate(-50)" text-anchor="end" y="4">15:35</text><text transform="translate(256.4 617.5) rotate(-50)" text-anchor="end" y="4">15:42</text><text transform="translate(321.7 617.5) rotate(-50)" text-anchor="end" y="4">15:49</text><text transform="translate(387.1 617.5) rotate(-50)" text-anchor="end" y="4">15:56</text><text transform="translate(452.5 617.5) rotate(-50)" text-anchor="end" y="4">16:03</text><text transform="translate(517.9 617.5) rotate(-50)" text-anchor="end" y="4">16:10</text><text transform="translate(583.2 617.5) rotate(-50)" text-anchor="end" y="4">16:17</text><text transform="translate(648.6 617.5) rotate(-50)" text-anchor="end" y="4">16:24</text><text transform="translate(714.0 617.5) rotate(-50)" text-anchor="end" y="4">16:31</text><text transform="translate(779.4 617.5) rotate(-50)" text-anchor="end" y="4">16:38</text><text transform="translate(844.7 617.5) rotate(-50)" text-anchor="end" y="4">16:45</text><text transform="translate(910.1 617.5) rotate(-50)" text-anchor="end" y="4">16:52</text><text transform="translate(975.5 617.5) rotate(-50)" text-anchor="end" y="4">16:59</text><text transform="translate(1040.8 617.5) rotate(-50)" text-anchor="end" y="4">17:06</text><text transform="translate(1106.2 617.5) rotate(-50)" text-anchor="end" y="4">17:13</text><text transform="translate(1171.6 617.5) rotate(-50)" text-anchor="end" y="4">17:20</text><text transform="translate(28.2 466.6) rotate(-90)" text-anchor="middle">Leistung [kW]</text><text transform="translate(1223.8 466.8) rotate(90)" text-anchor="middle">SoC [%]</text><text x="120.9" y="318.6">SolarEdge Zähler</text><text x="270.3" y="318.6">Hausverbr.</text><text x="384.3" y="318.6">LP ges.</text><text x="481.2" y="318.6">PV ges.</text><text x="579.0" y="318.6">openWB Pro</text><text x="703.6" y="318.6">Standard-Fahrzeug</text><text x="863.0" y="318.6">Tesla</text><text x="947.4" y="318.6">Speicher ges.</text><text x="1076.8" y="318.6">Speicher ges. SoC</text></g>
</svg>
<div style="position:absolute;left:3.4px;top:660.6px;width:1244px;height:54.3px;background:#b5bacb;border-radius:4px 4px 0 0;border-bottom:1px solid #a2a6b6;box-sizing:border-box"></div>
<div style="position:absolute;left:3px;top:716px;width:1245px;height:140px;border:1px solid #2f3136;box-sizing:border-box;background:#fff"><div style="height:53.4px;background:#d1d7e8;border-bottom:1px solid #b4b9c9"></div></div>
<svg class="ic" style="left:112.60px;top:727.60px" width="9.00" height="12" viewBox="0 0 384 512"><path fill="#006400" d="M256 144V32c0-17.673 14.327-32 32-32s32 14.327 32 32v112h-64zm112 16H16c-8.837 0-16 7.163-16 16v32c0 8.837 7.163 16 16 16h16v32c0 77.406 54.969 141.971 128 156.796V512h64v-99.204c73.031-14.825 128-79.390 128-156.796v-32h16c8.837 0 16-7.163 16-16v-32c0-8.837-7.163-16-16-16zm-240-16V32c0-17.673-14.327-32-32-32S64 14.327 64 32v112h64z"/></svg>
<svg class="ic" style="left:661.30px;top:750.60px" width="13.00" height="13" viewBox="0 0 512 512"><path fill="#343a40" d="M256.455 8c66.269.119 126.437 26.233 170.859 68.685l35.715-35.715C478.149 25.851 504 36.559 504 57.941V192c0 13.255-10.745 24-24 24H345.941c-21.382 0-32.090-25.851-16.971-40.971l41.750-41.750c-30.864-28.899-70.801-44.907-113.230-45.273-92.398-.798-170.283 73.977-169.484 169.442C88.764 348.009 162.184 424 256 424c41.127 0 79.997-14.678 110.629-41.556 4.743-4.161 11.906-3.908 16.368.553l39.662 39.662c4.872 4.872 4.631 12.815-.482 17.433C378.202 479.813 319.926 504 256 504 119.034 504 8.001 392.967 8 256.002 7.999 119.193 119.646 7.755 256.455 8z"/></svg>
<svg class="ic" style="left:1223.90px;top:724.20px" width="14.00" height="16" viewBox="0 0 448 512"><path fill="#495057" d="M400 32H48C21.500 32 0 53.500 0 80v352c0 26.500 21.500 48 48 48h352c26.500 0 48-21.500 48-48V80c0-26.500-21.500-48-48-48zM92 296c-6.600 0-12-5.400-12-12v-56c0-6.600 5.400-12 12-12h264c6.600 0 12 5.400 12 12v56c0 6.600-5.400 12-12 12H92z"/></svg>
<span id="c3" class="t tb" style="left:691.5px;top:720.6px;font-family:'DejaVu Sans',sans-serif;font-size:14.6px">③</span>
<div style="position:absolute;left:8px;top:777px;width:1235px;height:50px;box-sizing:border-box;background:#d1ecf1;border:1px solid #bee5eb;border-radius:4px"></div>
<svg class="ic" style="left:34.60px;top:793.80px" width="16.00" height="16" viewBox="0 0 512 512"><path fill="#0c5460" d="M256 8C119.043 8 8 119.083 8 256c0 136.997 111.043 248 248 248s248-111.003 248-248C504 119.083 392.957 8 256 8zm0 110c23.196 0 42 18.804 42 42s-18.804 42-42 42-42-18.804-42-42 18.804-42 42-42zm56 254c0 6.627-5.373 12-12 12h-88c-6.627 0-12-5.373-12-12v-24c0-6.627 5.373-12 12-12h12v-64h-12c-6.627 0-12-5.373-12-12v-24c0-6.627 5.373-12 12-12h64c6.627 0 12 5.373 12 12v100h12c6.627 0 12 5.373 12 12v24z"/></svg>
<svg class="ic" style="left:13.10px;top:835.00px" width="14.00" height="16" viewBox="0 0 448 512"><path fill="#212529" d="M400 224h-24v-72C376 68.200 307.800 0 224 0S72 68.200 72 152v72H48c-26.500 0-48 21.500-48 48v192c0 26.500 21.500 48 48 48h352c26.500 0 48-21.500 48-48V272c0-26.500-21.500-48-48-48zm-104 0H152v-72c0-39.700 32.300-72 72-72s72 32.300 72 72v72z"/></svg>
<div style="position:absolute;left:425px;top:831px;width:11px;height:30px;box-sizing:border-box;border:1px solid #28a745;border-radius:4px 0 0 4px;background:#fff"></div>
<div style="position:absolute;left:435.2px;top:831px;width:803px;height:30px;background:#28a745;border-radius:0 4px 4px 0"></div>
<span id="h1a" class="t hd" style="left:33.92px;top:9.63px;letter-spacing:-0.331px">75 %</span>
<span id="h1b" class="t hd" style="left:91.35px;top:9.63px;letter-spacing:-0.220px">763 W</span>
<span id="h2" class="t hd" style="left:305.14px;top:9.63px;letter-spacing:-0.138px">5,45 kW</span>
<span id="h3" class="t hd" style="left:551.92px;top:9.63px;letter-spacing:0.347px">6 W</span>
<span id="h4" class="t hd" style="left:782.58px;top:9.63px;letter-spacing:0.248px">448 W</span>
<span id="h5" class="t hd" style="left:1050.82px;top:9.63px;letter-spacing:-0.188px">4,24 kW</span>
<span id="b1" class="t bd" style="left:12.42px;top:39.63px;letter-spacing:-0.627px">SoC</span>
<span id="b1v" class="t bd" style="left:206.30px;top:39.63px;letter-spacing:-0.290px">75 %</span>
<span id="b2" class="t bd bi" style="left:13.15px;top:63.63px;letter-spacing:0.210px">Heute:</span>
<span id="b3" class="t bd" style="left:13.11px;top:87.63px;letter-spacing:0.094px">Geladen</span>
<span id="b3v" class="t bd" style="left:175.32px;top:87.63px;letter-spacing:0.061px">5,29 kWh</span>
<span id="b4" class="t bd" style="left:12.80px;top:111.63px;letter-spacing:0.131px">Entladen</span>
<span id="b4v" class="t bd" style="left:175.32px;top:111.63px;letter-spacing:0.061px">5,39 kWh</span>
<span id="b5" class="t bd bi" style="left:13.15px;top:168.63px;letter-spacing:-0.047px">Einstellungen:</span>
<span id="b6" class="t bd" style="left:12.80px;top:192.63px;letter-spacing:0.067px">Laden mit Überschuss</span>
<span id="d1" class="t bd" style="left:33.27px;top:261.63px;letter-spacing:0.461px">Diagramm</span>
<span id="th1" class="t tb b" style="left:12.81px;top:664.63px;letter-spacing:0.267px">Ladepunkt</span>
<span id="th2" class="t tb b" style="left:321.37px;top:664.63px;letter-spacing:0.042px">Lademodus</span>
<span id="th2b" class="t tb b" style="left:321.37px;top:688.63px;letter-spacing:0.142px">Fahrzeug</span>
<span id="th3" class="t tb b" style="left:629.98px;top:664.63px;letter-spacing:0.285px">Parameter</span>
<span id="th3b" class="t tb b" style="left:630.20px;top:688.63px;letter-spacing:-0.853px">SoC</span>
<span id="th4" class="t tb b" style="left:938.86px;top:664.63px;letter-spacing:0.451px">geladen</span>
<span id="r1" class="t tb b" style="left:13.40px;top:720.63px;letter-spacing:0.143px">openWB Pro</span>
<span id="r2" class="t tb" style="left:321.19px;top:720.63px;letter-spacing:-1.733px">PV</span>
<span id="r2b" class="t tb" style="left:321.32px;top:744.63px;letter-spacing:0.038px">Standard-Fahrzeug</span>
<span id="r3a" class="t tb" style="left:630.69px;top:720.63px;letter-spacing:-0.165px">4,24 kW</span>
<span id="r3c" class="t tb" style="left:709.24px;top:720.63px;letter-spacing:0.720px">6 A</span>
<span id="r3b" class="t tb" style="left:630.38px;top:744.63px;letter-spacing:-0.410px">0 %</span>
<span id="r4" class="t tb" style="left:938.86px;top:720.63px;letter-spacing:0.227px">0,7 kWh / 3,8 km</span>
<span id="al" class="t al" style="left:54.55px;top:789.63px;letter-spacing:0.137px">Verzögerung für die Umschaltung von 3 auf 1 Phasen abgebrochen, da ausreichend Überschuss für mehrphasiges Laden zur Verfügung steht.</span>
<span id="ls" class="t bd" style="left:30.66px;top:831.63px;letter-spacing:0.278px">Ladepunkt sperren</span>
<span id="ne" class="t wh" style="left:820.19px;top:834.63px;letter-spacing:0.425px">Nein</span>
</body></html>
